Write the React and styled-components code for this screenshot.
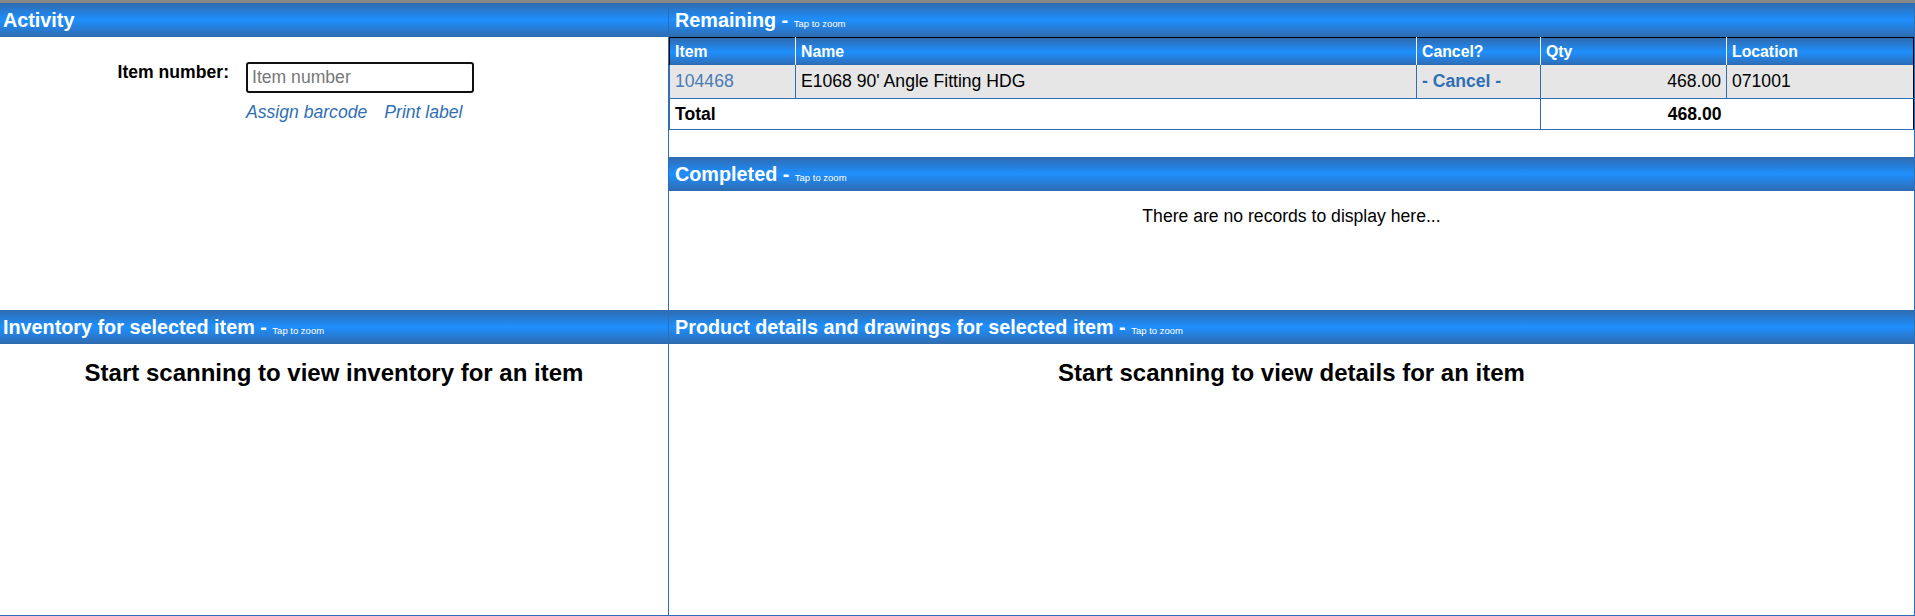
import React from "react";
import styled, { createGlobalStyle } from "styled-components";

const LINE = "#2f6db5";
const BAR = "linear-gradient(to bottom, #2f6bb0 0%, #1e8ffd 50%, #2f6bb0 100%)";

const GlobalStyle = createGlobalStyle`
    html, body {
        margin: 0;
        padding: 0;
        background: #fff;
    }
    body {
        font-family: "Liberation Sans", Arial, sans-serif;
        font-size: 17.6px;
        color: #000;
    }
`;

const Page = styled.div`
    width: 1915px;
    height: 616px;
    overflow: hidden;
    display: flex;
    flex-direction: column;
`;

const TopStrip = styled.div`
    flex: none;
    height: 3px;
    background: #878787;
`;

const Board = styled.div`
    flex: 1;
    display: grid;
    grid-template-columns: 669px 1fr;
    grid-template-rows: 307px 1fr;
    min-height: 0;
`;

const Stack = styled.div`
    display: flex;
    flex-direction: column;
    min-height: 0;
`;

const Panel = styled.section`
    box-sizing: border-box;
    display: flex;
    flex-direction: column;
    min-height: 0;
    flex: ${(p) => (p.$height ? "none" : "1")};
    height: ${(p) => (p.$height ? `${p.$height}px` : "auto")};
    border-right: 1px solid ${LINE};
    border-bottom: ${(p) => (p.$bottom ? `1px solid ${LINE}` : "none")};
`;

const Header = styled.header`
    flex: none;
    height: 34px;
    line-height: 34px;
    padding-left: ${(p) => p.$inset}px;
    background: ${BAR};
    color: #fff;
    font-size: 19.8px;
    font-weight: bold;
    white-space: nowrap;
`;

const Hint = styled.span`
    font-size: 9.5px;
    font-weight: normal;
`;

const Form = styled.div`
    display: grid;
    grid-template-columns: 229px 228px;
    column-gap: 17px;
    row-gap: 9px;
    align-items: start;
    padding-top: 25px;
`;

const Label = styled.label`
    text-align: right;
    font-weight: bold;
    line-height: 20px;
`;

const Input = styled.input`
    box-sizing: border-box;
    width: 228px;
    height: 31px;
    margin: 0;
    padding: 0 4px;
    border: 2px solid #111;
    border-radius: 3px;
    font-family: inherit;
    font-size: 17.6px;
    outline: none;
    &::placeholder {
        color: #777;
    }
`;

const Links = styled.div`
    grid-column: 2;
    display: flex;
    gap: 17px;
    white-space: nowrap;
`;

const Link = styled.a`
    color: #2f6fb5;
    font-size: 17.6px;
    font-style: italic;
    line-height: 20px;
    text-decoration: none;
`;

const Table = styled.table`
    width: 100%;
    table-layout: fixed;
    border-collapse: collapse;
    border: 1px solid #000;
`;

const Th = styled.th`
    height: 27px;
    padding: 0 5px;
    background: ${BAR};
    color: #fff;
    font-size: 15.8px;
    font-weight: bold;
    text-align: left;
    border-right: 1px solid #f2f6fb;
    &:last-child {
        border-right: none;
    }
`;

const Row = styled.tr`
    background: ${(p) => (p.$shade ? "#e6e6e6" : "#fff")};
    border-bottom: 1px solid ${LINE};
`;

const Td = styled.td`
    height: ${(p) => p.$h || 33}px;
    padding: 0 5px;
    text-align: ${(p) => p.$align || "left"};
    font-weight: ${(p) => (p.$bold ? "bold" : "normal")};
    color: ${(p) => p.$color || "#000"};
    border-left: ${(p) => (p.$open ? "none" : `1px solid ${LINE}`)};
    white-space: nowrap;
    overflow: hidden;
`;

const CancelLink = styled.a`
    color: #2f6fb5;
    font-weight: bold;
    text-decoration: none;
`;

const Empty = styled.div`
    padding-top: 15px;
    text-align: center;
    line-height: 20px;
`;

const Prompt = styled.h2`
    margin: 0;
    padding-top: 15px;
    text-align: center;
    font-size: 24px;
    line-height: 28px;
`;

const PanelHeader = ({ title, inset, zoom }) => (
    <Header $inset={inset}>
        {title}
        {zoom && (
            <>
                {" - "}
                <Hint>Tap to zoom</Hint>
            </>
        )}
    </Header>
);

const remaining = [{ item: "104468", name: "E1068 90' Angle Fitting HDG", qty: "468.00", location: "071001" }];

const App = () => {
    return (
        <Page>
            <GlobalStyle />
            <TopStrip />
            <Board>
                <Panel>
                    <PanelHeader title="Activity" inset={3} />
                    <Form>
                        <Label htmlFor="item-number">Item number:</Label>
                        <Input id="item-number" placeholder="Item number" />
                        <Links>
                            <Link href="#">Assign barcode</Link>
                            <Link href="#">Print label</Link>
                        </Links>
                    </Form>
                </Panel>

                <Stack>
                    <Panel $height={154}>
                        <PanelHeader title="Remaining" inset={6} zoom />
                        <Table>
                            <colgroup>
                                <col style={{ width: 126 }} />
                                <col style={{ width: 621 }} />
                                <col style={{ width: 124 }} />
                                <col style={{ width: 186 }} />
                                <col />
                            </colgroup>
                            <thead>
                                <tr>
                                    <Th>Item</Th>
                                    <Th>Name</Th>
                                    <Th>Cancel?</Th>
                                    <Th>Qty</Th>
                                    <Th>Location</Th>
                                </tr>
                            </thead>
                            <tbody>
                                {remaining.map((r) => (
                                    <Row key={r.item} $shade>
                                        <Td $color="#4a7bb3">{r.item}</Td>
                                        <Td>{r.name}</Td>
                                        <Td>
                                            <CancelLink href="#">- Cancel -</CancelLink>
                                        </Td>
                                        <Td $align="right">{r.qty}</Td>
                                        <Td>{r.location}</Td>
                                    </Row>
                                ))}
                                <Row>
                                    <Td colSpan={3} $h={30} $bold>
                                        Total
                                    </Td>
                                    <Td $h={30} $align="right" $bold>
                                        468.00
                                    </Td>
                                    <Td $h={30} $open />
                                </Row>
                            </tbody>
                        </Table>
                    </Panel>
                    <Panel>
                        <PanelHeader title="Completed" inset={6} zoom />
                        <Empty>There are no records to display here...</Empty>
                    </Panel>
                </Stack>

                <Panel $bottom>
                    <PanelHeader title="Inventory for selected item" inset={3} zoom />
                    <Prompt>Start scanning to view inventory for an item</Prompt>
                </Panel>
                <Panel $bottom>
                    <PanelHeader title="Product details and drawings for selected item" inset={6} zoom />
                    <Prompt>Start scanning to view details for an item</Prompt>
                </Panel>
            </Board>
        </Page>
    );
};

export default App;
